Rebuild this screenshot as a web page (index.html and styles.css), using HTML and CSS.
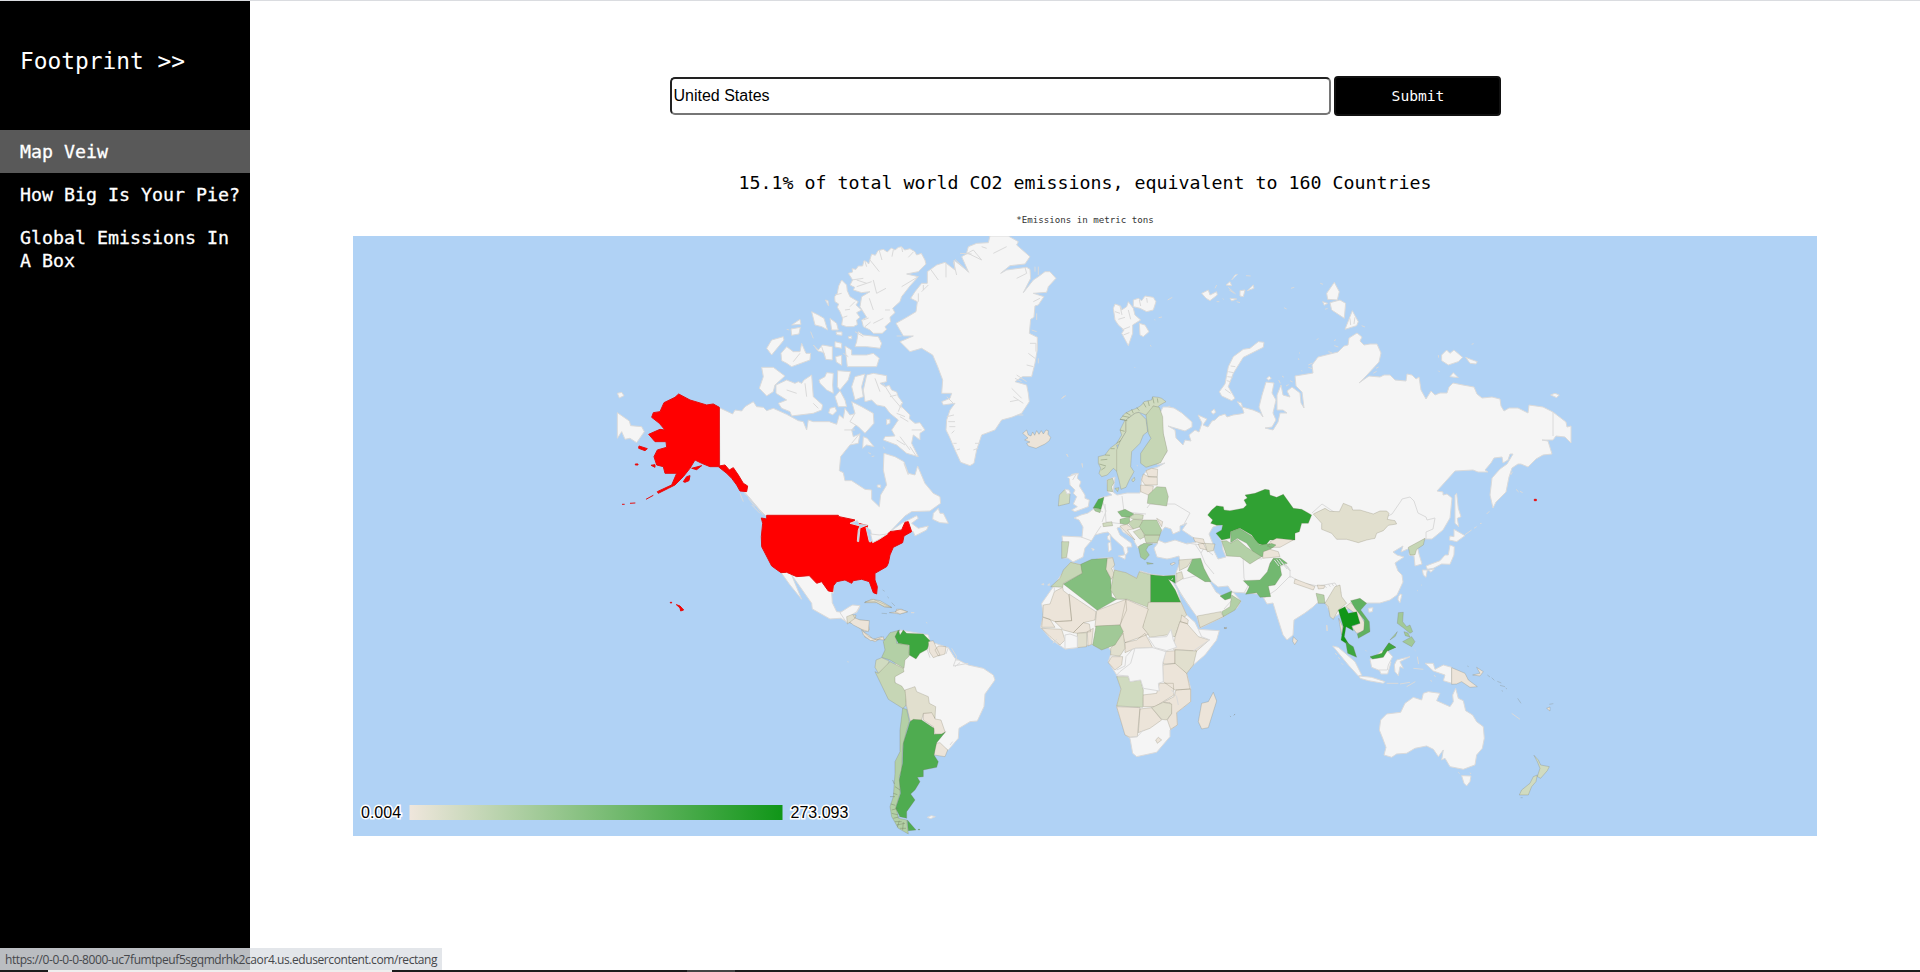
FILE: index.html
```html
<!DOCTYPE html>
<html lang="en">
<head>
<meta charset="utf-8">
<title>Footprint</title>
<link rel="stylesheet" href="styles.css">
</head>
<body>
<div class="layout">
  <nav class="sidebar">
    <h1 class="brand">Footprint &gt;&gt;</h1>
    <a class="nav-link active">Map Veiw</a>
    <a class="nav-link">How Big Is Your Pie?</a>
    <a class="nav-link">Global Emissions In<br>A Box</a>
  </nav>
  <main class="content">
    <form class="search">
      <input class="country" type="text" value="United States">
      <button class="submit" type="button">Submit</button>
    </form>
    <p class="summary">15.1% of total world CO2 emissions, equivalent to 160 Countries</p>
    <p class="note">*Emissions in metric tons</p>
    <svg class="map" viewBox="353 236 1464 600">
      <defs>
        <linearGradient id="scale"><stop offset="0" stop-color="#efe6dc"/><stop offset="1" stop-color="#109618"/></linearGradient>
      </defs>
      <!-- Eurasia -->
      <path class="land" d="M1160 413L1163 407 1168 407 1174 408 1182 413 1192 422 1192 427 1185 431 1168 426 1175 430 1176 438 1183 445 1185 440 1191 441 1189 435 1195 430 1199 432 1202 423 1198 415 1207 419 1203 425 1208 427 1212 421 1215 420 1219 416 1225 414 1227 417 1233 415 1240 414 1244 413 1242 407 1253 410 1260 413 1263 417 1259 407 1262 395 1266 382 1274 383 1272 393 1276 400 1273 413 1276 420 1272 427 1265 428 1273 430 1278 422 1280 413 1287 413 1283 410 1277 410 1277 395 1281 385 1283 395 1290 397 1287 391 1292 387 1300 393 1301 403 1304 408 1302 392 1296 386 1295 376 1313 373 1312 365 1318 357 1330 354 1338 352 1344 346 1348 345 1349 338 1357 333 1362 337 1360 341 1364 345 1370 344 1377 344 1381 353 1379 362 1367 375 1359 383 1366 378 1369 376 1380 377 1384 375 1390 375 1395 380 1406 381 1407 374 1412 375 1416 379 1419 377 1421 390 1426 399 1431 391 1435 395 1440 393 1447 393 1449 387 1453 383 1463 385 1474 387 1477 394 1482 398 1492 397 1500 399 1501 406 1504 411 1509 408 1518 408 1528 413 1529 405 1543 407 1553 412 1566 422 1567 427 1571 426 1571 443 1565 437 1556 436 1553 440 1542 440 1548 441 1552 454 1543 455 1536 459 1528 467 1521 464 1518 464 1512 468 1509 477 1506 492 1500 498 1496 502 1493 508 1490 495 1492 478 1500 469 1507 464 1510 459 1513 454 1510 454 1508 460 1503 463 1502 457 1494 458 1491 463 1485 470 1488 472 1478 472 1473 470 1455 471 1437 491 1443 492 1443 495 1447 494 1452 498 1450 518 1443 530 1432 539 1424 539 1417 545 1419 554 1422 564 1415 566 1414 556 1409 555 1410 548 1401 552 1403 546 1393 552 1397 555 1404 557 1395 563 1398 571 1402 575 1403 582 1397 595 1390 600 1380 603 1372 603 1366 603 1355 606 1345 610 1333 618 1325 602 1317 603 1313 607 1305 613 1294 620 1293 635 1287 640 1283 635 1276 613 1273 603 1267 604 1263 597 1258 594 1246 593 1232 592 1228 586 1218 587 1212 582 1205 573 1202 573 1210 582 1216 592 1222 596 1233 592 1241 601 1237 608 1223 617 1200 628 1197 617 1187 603 1180 592 1175 583 1176 573 1180 562 1179 556 1172 558 1167 559 1157 557 1154 548 1158 543 1150 543 1140 545 1138 548 1135 543 1133 538 1123 532 1120 527 1117 528 1120 535 1131 543 1132 547 1127 547 1128 552 1125 556 1123 547 1113 538 1108 532 1102 533 1095 535 1092 540 1085 548 1083 557 1073 562 1068 558 1062 558 1063 543 1062 536 1082 537 1083 527 1079 520 1074 518 1081 515 1088 513 1095 508 1100 498 1112 495 1108 492 1107 480 1115 477 1113 492 1117 495 1127 493 1140 493 1142 477 1147 470 1158 467 1165 463 1157 465 1167 452 1163 433Z"/>
      <!-- Inland seas -->
      <path class="sea" d="M1158 540L1160 533 1165 527 1171 529 1173 534 1180 531 1180 526 1187 523 1182 530 1194 538 1196 542 1187 544 1175 540 1165 543ZM1209 534L1213 527 1222 524 1223 529 1218 535 1222 542 1223 550 1226 557 1218 559 1214 551 1213 544Z"/>
      <!-- State borders on the uncoloured countries -->
      <path class="line" d="M1312 513L1322 504 1340 516 1366 513 1380 520 1392 514 1401 501 1402 499 1410 497 1414 501 1418 513 1426 517 1427 520 1435 518 1433 529 1426 532 1426 539M1147 508L1150 504 1175 504 1190 513 1183 526M1122 496L1124 512 1146 514M1102 522L1106 511 1102 500M1095 535L1101 526M1095 508L1103 512M1105 504L1106 522 1124 524M1081 537L1092 541M1201 553L1205 563 1214 574M1195 544L1201 553 1204 548 1213 555M1243 556L1244 578 1248 586 1244 593M1244 557L1262 559M1264 598L1276 590 1290 576 1302 583 1318 586 1335 583 1341 593M1280 559L1290 571 1290 578M1176 573L1183 579 1203 574M1180 593L1190 607M1232 600L1224 609M1187 543L1201 545M1553 412V436"/>
      <!-- Africa -->
      <g transform="translate(1020 540) scale(.3333)">
        <path class="land" d="M152 67L185 75 240 55 278 53 282 90 320 100 350 115 360 93 395 103 435 108 465 105 468 130 462 118 455 120 472 150 483 187 500 225 525 247 535 268 598 272 590 300 555 345 520 375 500 400 512 445 512 485 470 518 472 555 450 570 450 590 410 637 350 650 338 640 330 595 317 585 290 500 303 445 290 405 265 365 275 335 265 322 245 328 215 313 172 322 135 327 95 300 62 262 70 225 65 190 100 140 130 95Z"/>
        <path class="c2" d="M152 67L185 75 187 100 130 130 128 142 92 140 120 115 130 90Z"/>
        <path class="c5" d="M182 73L215 58 262 55 262 95 272 115 275 170 290 178 232 211 130 132 187 100Z"/>
        <path class="c1" d="M262 55L278 53 284 75 275 85 283 102 275 118 258 88Z"/>
        <path class="c2" d="M283 90L318 98 350 115 358 95 392 104 392 205 322 178 290 178 272 150Z"/>
        <path class="c9" d="M392 104L430 108 465 106 466 130 445 118 466 150 482 187 392 187Z"/>
        <path class="c1" d="M385 187H483L500 225 480 245 465 290 440 285 390 292 368 262Z"/>
        <path class="c0" d="M128 142L130 152 147 165 155 242 105 245 68 230 70 195 90 192 103 155ZM147 162L228 215 225 240 190 248 160 278 130 270 105 245 155 242ZM230 212L318 178 320 210 300 255 225 260ZM318 178L385 207 368 262 385 283 315 308 300 260ZM68 232L90 238 105 262 65 262ZM65 265L125 268 135 300 120 315 90 290ZM160 278L190 248 208 252 212 275 172 280ZM202 275L220 265 215 313 204 318ZM480 245L500 250 535 290 568 300 530 333 460 328 465 292ZM315 308L350 300 375 280 398 323 345 325 315 338ZM275 350L308 350 305 375 285 390 265 368ZM433 335L465 332 465 370 430 372ZM428 375L470 370 500 400 510 447 465 450 430 425ZM368 465L410 460 418 430 460 430 462 465 405 500 370 500ZM462 470L468 450 512 447 512 485 470 518 472 555 452 568 442 540 455 520 450 488 430 487ZM290 500L360 503 352 590 330 592 315 585ZM360 507L395 503 425 540 390 565 355 578ZM545 490L565 485 580 457 590 483 565 563 545 567 535 545ZM407 600L415 592 425 600 412 610ZM482 245L485 225 505 240 503 252Z"/>
        <path class="c1" d="M172 280L200 278 200 320 172 323ZM395 503L430 487 455 492 455 520 440 540 425 538ZM465 330L530 333 520 375 500 400 465 370ZM272 325L310 280 315 325 300 348 272 345Z"/>
        <path class="c4" d="M228 258L300 255 310 275 285 315 245 330 218 315Z"/>
        <path class="c1b" d="M290 410L325 410 330 425 362 420 370 450 368 502 290 498 303 447Z"/>
        <path class="land" d="M385 293L440 290 453 268 460 300 470 322 440 332 405 323ZM345 325L398 323 438 335 428 370 430 425 415 430 418 453 370 445 362 420 330 425 325 408 290 405 300 395 332 370ZM135 285L150 282 172 290 172 323 135 327Z"/>
        <path class="line" d="M340 325L318 350 315 378 290 390M520 333L568 300M330 592L352 590 370 570M455 450L470 470 475 495M103 142L103 155M535 268L545 290 570 300M110 298L98 310M458 115L455 120"/>
        <path class="c0" d="M612 265L620 262 618 266ZM630 528L632 530ZM645 522L642 526Z"/>
        <path class="land" d="M65 133l6-2 0 4zM83 135l5-4 0 5z"/>
      </g>
      <!-- Europe and the Middle East -->
      <g transform="translate(1020 380) scale(.3333)">
        <path class="c0" d="M8 160L20 150 25 165 33 168 38 156 44 166 50 152 57 163 64 152 70 162 78 150 85 152 84 163 92 172 88 182 75 192 62 198 48 205 25 198 20 190 30 186 14 180 24 174Z"/>
        <path class="c1b" d="M235 230L255 225 270 205 290 190 305 165 300 150 315 120 300 118 315 100 335 90 350 85 365 75 372 65 395 60 398 50 415 52 425 55 438 65 420 75 412 82 400 78 395 90 378 105 357 97 345 100 318 120 318 155 300 185 300 195 290 195 297 225 292 275 280 265 262 285 245 290 237 280 242 265 235 250Z"/>
        <path class="c1b" d="M345 100L357 97 378 118 383 155 370 165 360 190 335 215 332 260 342 275 328 300 318 322 303 328 297 300 290 275 290 210 300 185 318 155 318 120ZM335 300l8-8 2 8-6 6z"/>
        <path class="c2" d="M378 105L400 78 418 82 428 110 430 160 442 212 422 248 378 262 362 250 362 220 393 175 385 160Z"/>
        <path class="edge-line" d="M300 118L322 122M307 108L328 112M318 98L332 106M335 88L340 100M350 82L358 92M370 68L378 82M384 62L388 78M398 52L402 70M412 55L414 68M300 150L314 154M290 190L302 182M255 225L270 226M242 240L262 238M238 252L258 258M244 270L256 262M272 206L284 206"/>
        <path class="c2" d="M262 300L278 295 282 308 275 320 278 335 262 333ZM285 325l12-2-4 12z"/>
        <path class="land" d="M155 283L175 280 172 295 183 305 178 318 195 345 195 355 208 360 205 380 165 395 155 390 172 380 160 372 170 350 160 340 165 330 150 315 148 295Z"/>
        <path class="c1b" d="M118 345L135 328 150 342 148 370 115 378Z"/>
        <path class="land" d="M135 328l12 2 4 10-10 2zM140 222l4 8zM186 250l2 12zM125 55l12-8zM262 470l8-8 2 20-8-3zM264 490l8-5 2 25-8 5zM295 528l22-4-2 14zM215 505l8 3-4 4z"/>
        <path class="c8" d="M220 383L235 358 252 352 248 370 243 388Z"/>
        <path class="c4" d="M220 383L243 388 240 398 225 393Z"/>
        <path class="c0" d="M378 272L395 265 413 268 412 290 385 290ZM365 300L370 282 385 290 412 292 412 315 375 315ZM362 315L400 318 398 335 385 345 362 335Z"/>
        <path class="c3" d="M385 345L400 330 410 320 437 322 445 350 440 378 382 370Z"/>
        <path class="c5" d="M293 395L315 388 342 402 328 412 305 410Z"/>
        <path class="c4" d="M300 418L328 410 330 425 320 435 300 430Z"/>
        <path class="c1b" d="M248 430L275 425 278 437 250 440ZM328 412L345 402 370 405 368 418 340 418ZM340 455L365 445 375 470 360 478Z"/>
        <path class="c2" d="M325 430L340 418 368 420 362 440 340 447ZM372 465L420 465 412 488 378 488Z"/>
        <path class="c3" d="M358 440L370 420 410 420 425 450 420 465 375 465Z"/>
        <path class="c0" d="M300 438L320 433 340 447 322 450 345 480 315 455ZM410 415L428 425 425 440ZM520 473L550 477 555 492 525 485ZM535 492L550 490 560 510 540 505Z"/>
        <path class="c1" d="M555 490L585 492 580 512 562 515Z"/>
        <path class="c4" d="M355 500L372 490 398 492 385 498 378 510 388 525 375 540 362 532ZM380 547l20 4-18 2z"/>
        <path class="c2" d="M125 485L147 485 140 532 125 535Z"/>
        <path class="c1" d="M477 540L518 537 502 560 478 572ZM470 580L485 575 490 595 470 607Z"/>
        <path class="c5" d="M518 537L542 535 552 565 573 605 555 605 502 572Z"/>
        <path class="c0" d="M450 552l12-5 4 3-10 6z"/>
      </g>
      <!-- Asia -->
      <g transform="translate(1180 460) scale(.3333)">
        <path class="c10" d="M83 165L95 150 110 137 130 140 132 150 150 152 190 145 200 135 192 120 202 114 195 105 225 100 255 88 268 90 270 105 290 112 310 103 340 145 365 148 378 155 395 165 385 190 365 190 358 215 345 220 345 240 270 240 255 258 232 250 215 225 180 205 152 215 150 235 125 240 108 220 125 210 128 195 110 196 92 190 98 180Z"/>
        <path class="c5" d="M152 215L178 205 215 228 240 255 275 250 285 255 248 290 230 290 200 250 172 235 152 248Z"/>
        <path class="c3" d="M125 243L140 242 152 250 172 238 200 262 245 290 210 312 180 290 140 288Z"/>
        <path class="c0" d="M270 245L290 235 340 240 300 262 270 262ZM250 275L270 268 295 275 300 290 248 295ZM345 357L405 380 400 390 342 370ZM412 375L435 377 432 385 415 387Z"/>
        <path class="c1" d="M400 162L435 145 450 154 478 155 490 130 515 140 518 150 540 150 580 162 600 153 620 153 627 160 622 178 645 182 650 192 625 196 610 212 590 220 585 235 560 240 535 248 500 238 470 238 455 220 425 208 425 190Z"/>
        <path class="c6" d="M190 362L240 360 262 335 270 310 280 295 302 295 322 310 300 318 305 345 285 375 265 378 272 410 240 412 230 398 197 403 208 380Z"/>
        <path class="c7" d="M120 408L155 393 152 415 135 420Z"/>
        <path class="c3" d="M155 405L183 423 165 450 130 470 125 455 150 440Z"/>
        <path class="c1" d="M52 468L122 455 130 470 60 503Z"/>
        <path class="c3" d="M408 400L432 405 435 430 415 430Z"/>
        <path class="c1" d="M435 430L465 380 480 375 485 410 500 430 475 450 460 478 450 470 445 440Z"/>
        <path class="c0" d="M497 440L512 428 530 445 555 490 550 515 530 520 515 500 540 490 525 460ZM476 475L488 500 485 525ZM340 530l12 12-8 12-6-10z"/>
        <path class="c7" d="M512 422L540 415 560 430 542 450 568 485 570 515 535 535 532 522 552 510 553 480 525 445Z"/>
        <path class="c11" d="M475 450L495 440 505 460 530 455 540 490 515 498 520 512 498 500 493 530 510 558 483 540 490 500Z"/>
        <path class="c9" d="M497 545L520 560 530 592 503 580ZM572 592L605 580 627 548 647 562 625 572 612 592 580 598Z"/>
        <path class="c2" d="M685 262L735 235 730 255 710 268 705 285 690 285Z"/>
        <path class="c4" d="M655 458L670 457 668 485 680 500 690 495 698 515 690 520 672 505 652 490ZM668 545L695 530 705 545 695 560ZM630 540l22-25-6 14zM672 515l12 4 6 12-14-4z"/>
        <path class="c0" d="M132 503l8 2z"/>
        <path class="land" d="M655 410l6-8 5 2-6 24-6-8zM565 445l14-2-2 12-10 2zM440 495l2 18zM605 572l-22 20 20 50 20 0 10-35z"/>
        <path class="line" d="M283 300l14 18M290 298l16 22M298 297l16 22M305 305l16 22M315 310l14 22M322 318l10 15M435 378l5 6M445 372l6 8M455 370l6 8"/>
        <path class="c5" d="M262 258l12-8 14 5-10 8z"/>
      </g>
      <!-- Japan, Sakhalin and the Kurils -->
      <g transform="translate(1340 440) scale(.3333)">
        <path class="land" d="M345 165L350 160 355 205 363 230 352 235 356 260 345 250ZM342 268L375 287 350 305 328 300 330 288 342 290ZM330 315L343 320 342 345 330 373 305 372 280 385 262 388 258 378 300 362 315 345 325 345ZM247 390L262 390 258 412 250 405ZM265 390l18-3-10 10zM375 284L395 270M402 265l8-5M420 251l5-1M440 222l8-8M528 148l8 8M540 154l8 4M512 105l6-10"/>
        <path class="us" d="M583 178h6v4h-6z"/>
      </g>
      <!-- Arctic islands of Eurasia -->
      <g transform="translate(1100 230) scale(.3333)">
        <path class="land" d="M40 235L45 222 62 228 65 240 80 230 85 215 100 235 105 255 122 270 98 285 98 310 85 347 65 310 72 300 55 285 45 270ZM100 210L115 205 125 212 135 198 160 202 168 215 160 240 140 245 120 235 100 230ZM118 280L135 285 147 305 130 320 120 315ZM203 210l14-8M176 263l10-2M164 268l1 3M150 346l4 3M104 412l2 2M305 190L325 180 330 195 350 185 352 195 330 212 318 205ZM345 175l5-10M378 165l12-10 5 12zM395 150l10-15 8-2M385 172l22 20M388 180l15 10M420 182L435 180 430 200 420 198ZM442 182L460 165 462 175ZM390 205l20 2-15 6zM410 215l10 3M438 137l14 1M350 215l8 0M368 206l3 2M573 175l10-3M552 233l8 4M661 160l8 3M680 190L703 157 718 185 712 210 683 208ZM690 218L720 210 737 220 733 265 695 240ZM668 215l15 5-10 6zM675 238l8-3M735 298L750 260 757 242 775 275 770 287ZM785 287l10 4M650 330l5-5M702 332l6-3M703 347l12 4M685 365l12 4M597 368l3 2M595 385l2 5M604 422l3 1M625 405l12-6M625 412l12 4M828 415l8-4M820 430l10-6M358 485L375 462 385 410 400 380 430 358 450 355 475 335 492 337 490 352 430 382 400 430 385 470 405 505 395 512 365 498ZM412 515l12 4 4 14-8-6zM500 445l8-6 6 6-8 6zM536 450l5 10M546 438l6 4M570 452l8 4M558 468l8-4M333 545l10-8 4 10-8 6zM1025 375L1040 360 1050 370 1062 360 1088 382 1075 395 1045 405 1025 392ZM1097 382L1112 388 1132 395 1128 402 1110 400ZM1015 375l1 8M1015 422l4 4M1115 343l6-2M1050 440L1060 428 1075 443ZM1352 495L1365 490 1378 495 1370 503ZM205 529l6 0M110 706l4 2"/>
        <path class="line" d="M45 245L60 250M55 268L75 262M65 300L90 290M70 315L88 308M85 240L92 268M60 228L66 255M118 210L122 228M140 204L142 218M385 425L400 428M382 440L398 442M380 452L392 455M392 408L406 410M375 478L392 490M750 265L752 285M765 262L762 282"/>
      </g>
      <!-- North America -->
      <g transform="translate(600 230) scale(.3333)">
        <path class="land" d="M358 533L398 552 405 540 425 543 435 530 460 515 470 530 490 532 500 542 520 535 560 553 595 572 610 575 620 600 625 570 640 575 688 575 710 583 718 555 730 565 735 535 750 555 768 550 772 580 755 600 760 620 780 612 775 640 750 645 722 680 718 722 730 728 735 752 755 752 795 778 815 780 815 808 838 830 842 795 860 765 850 720 852 670 885 680 912 695 925 730 945 735 953 708 975 760 1000 790 1020 800 1022 820 990 843 935 845 915 858 870 905 905 880 935 865 950 857 955 865 935 880 955 895 985 888 980 900 945 918 940 905 890 905 830 950 700 1050 700 1090 695 1088 697 1118 710 1145 740 1148 755 1127 780 1130 770 1148 750 1152 740 1175 722 1165 690 1167 637 1137 635 1120 600 1070 575 1035 585 1060 605 1108 570 1065 545 1030 540 1000 500 860 480 840 420 770 360 705Z"/>
        <path class="land" d="M1000 850L1015 835 1020 850 1030 850 1045 880 1020 878 998 868ZM52 548L88 573 92 587 125 590 133 605 110 638 90 625 75 628 65 605 52 625ZM52 490L65 487 72 497 58 504ZM790 620L802 625 822 650 800 645 788 655ZM805 668l8 4M832 765l10 0 0 8-10-2zM850 650l4 8"/>
        <!-- Canadian arctic -->
        <path class="land" d="M745 130L758 126 756 116 768 118 775 108 788 108 792 92 800 95 806 102 815 72 826 76 834 62 850 58 862 66 874 54 885 60 895 52 905 50 914 60 930 56 945 65 950 75 964 70 975 90 978 102 955 125 920 132 955 140 930 168 905 200 900 215 878 235 885 248 870 262 872 275 855 290 860 298 847 310 820 310 810 300 790 290 785 270 800 262 780 230 785 200 810 185 785 188 760 180 764 172 750 165 758 150ZM725 150L740 165 742 182 750 200 775 215 768 225 785 240 770 248 780 262 770 270 772 284 760 290 740 290 725 285 728 265 720 245 712 232 716 222 705 215 704 200 712 190 716 168ZM775 305L790 315 835 320 845 340 840 355 800 350 765 350 770 335ZM735 348L755 360 755 375 800 375 820 370 838 385 830 410 742 410ZM690 265L710 280 715 300 695 300ZM635 245L655 255 672 265 683 300 665 290 645 285ZM632 305l8 20M676 210l8 2 2 16zM575 285l25-17 3 15zM573 297l28-5-4 20-22 4zM560 298l8 2M500 355L515 330 550 320 552 330 515 375ZM543 370L560 350 580 365 600 365 605 340 618 370 632 370 630 390 575 410 560 400 545 392ZM640 345l15 15 12-15 30 5 0 40-20-2-5-20-18-5zM705 335l20 5 0 15-20-4zM707 380l18-4 0 30-16-10zM708 306l18 0 0 10-16-2zM745 320l10-2 0 8-8 0zM485 412L520 412 555 438 525 465 520 485 500 498 478 475 490 440ZM528 465L560 450 585 460 595 455 605 460 612 450 635 435 640 500 668 525 665 540 640 550 575 558 570 545 545 535 535 520 560 510 528 490ZM657 450L675 440 680 428 700 430 698 465 700 490 680 480 660 460ZM713 422L752 425 745 450 720 480 712 470ZM705 500L720 482 735 510 740 530 715 530ZM690 535l15-4 5 12-12 12-12-6zM755 470L765 440 795 432 785 470 790 500 765 510ZM800 435L820 430 860 437 860 455 840 460 855 470 868 466 875 480 890 486 895 500 908 518 903 528 915 540 930 555 928 566 945 580 960 578 975 600 960 610 960 630 940 615 935 640 955 680 920 670 890 645 850 630 855 620 885 618 875 600 895 570 870 550 855 530 830 525 815 510 795 515 790 480ZM755 515L785 530 820 550 822 580 795 610 775 590 750 575 765 550ZM860 568l10 0 0 12-10 4zM815 680l8-2"/>
        <path class="line" d="M810 90L838 125M800 160L770 150M858 175L830 190 820 150M955 140L905 170M855 240L870 240M725 190L705 195M765 215L750 230M808 205L820 240M850 265L820 280M765 305L790 320M825 445L840 485M850 460L875 500 905 535M870 500L890 495M905 520L895 545M915 560L890 550M925 575L900 560M935 600L965 600M560 480L590 490M615 460L620 500M640 520L655 535M733 600L765 600M755 640L780 610M600 370L580 395M665 350L675 380M730 370L745 380M755 150L790 145M770 170L815 155M420 790L430 815M432 790L445 800 470 830 490 855M445 805L465 830M455 825L480 850M890 630L915 645M930 650L950 680M900 620L930 660M912 700L925 735M838 62L846 90M880 60L876 80M905 52L908 66M940 66L925 82M795 95L800 110M735 240L750 238M730 262L742 258M790 270L806 264M795 290L812 276"/>
        <!-- United States -->
        <path class="us" d="M500 856H715L717 860 765 870 750 882 775 880 803 887 800 895 812 920 808 938 860 915 870 905 905 900 915 877 925 875 935 905 912 918 908 938 880 952 870 975 865 1000 860 1010 825 1030 825 1050 832 1070 830 1092 820 1088 808 1055 785 1048 760 1052 755 1060 735 1050 710 1055 700 1068 698 1085 685 1083 665 1055 650 1060 628 1037 590 1040 560 1027 543 1028 515 1008 485 950 484 920 488 880 484 864 500 867ZM358 532V708L375 705 388 720 400 713 415 735 430 760 443 768 440 785 420 783 410 765 395 745 380 730 355 710 330 710 305 700 285 690 270 715 250 740 225 765 205 775 175 790 172 785 215 765 230 730 195 730 190 710 170 705 162 680 172 660 200 652 198 635 165 635 146 613 180 598 195 600 178 580 155 562 160 548 180 545 192 518 225 502 236 492 270 510 320 525 340 522ZM117 648L142 656 135 662 116 655ZM106 702h8v3h-8zM153 706l12-2 0 8zM138 808L160 796M66 823h8M90 820l16-1M250 755l10-15 10-3-3 15-12 5zM275 715l30-8-15 12zM211 1117h4v2h-4zM229 1124L240 1128 251 1140 242 1143 240 1134Z"/>
        <path class="lake" d="M750 880L772 872 778 884 802 885 780 894 776 935 772 934 775 900 780 888ZM798 892L812 900 815 918 825 920 812 936 808 935Z"/>
        <path class="land" d="M812 912L838 915 862 912 838 928 818 938Z"/>
        <!-- Central America and the Caribbean -->
        <path class="c1" d="M738 1175L750 1155 768 1155 765 1170 755 1180ZM793 1118L815 1108 840 1112 875 1132 855 1132 830 1118Z"/>
        <path class="c0" d="M758 1180L770 1170 803 1172 808 1200 795 1205ZM790 1205L805 1215 820 1228 845 1220 855 1230 838 1228 825 1235 795 1222ZM868 1148L888 1146 890 1138 905 1138 922 1146 900 1152ZM845 1150l16 1M848 1080l6 4M862 1100l5 5M875 1118l10 10"/>
        <path class="land" d="M933 1148h10M979 1178l2 1"/>
      </g>
      <!-- Greenland -->
      <g transform="translate(840 230) scale(.3333)">
        <path class="land" d="M450 18H505L535 35 530 45 570 80 555 102 510 107 482 130 500 120 560 112 570 118 572 145 550 188 580 150 595 140 615 125 630 125 648 145 625 170 620 187 580 190 612 200 595 225 585 228 582 262 572 268 568 310 592 322 592 360 585 400 575 440 548 440 525 455 560 465 565 490 568 515 545 550 515 562 485 570 465 600 425 615 410 660 402 700 390 707 362 697 345 660 328 620 318 600 320 570 330 540 345 520 310 525 305 515 330 505 335 490 305 490 308 450 293 410 278 375 245 355 210 365 180 335 220 318 190 318 168 280 200 262 228 245 232 215 212 205 225 185 245 160 262 160 262 125 290 105 315 97 345 120 342 90 385 125 365 80 400 60 425 90 380 68 385 50 410 40 445 38Z"/>
        <path class="line" d="M272 118L295 150M318 98L318 142M340 95L350 135M345 88L388 128M360 70L395 72M425 50L440 55M460 70L500 50M555 112L560 130 530 145M585 110V125M595 110L595 135M580 215L600 205M590 250v20M570 340h18M575 300l15 5M588 340v25M565 370l20 15M595 385v15M560 405l20 5M525 445l20 10M530 435l30 20M515 475l30 30M510 515l25-5M520 500l30 20M320 500l20 20M320 560l22-5M325 575l20 0M328 590l18 0M335 610l8-8M340 640l10 0M350 660l10-3M400 660l15-5M405 640l15 0M235 215V190M250 180V165M170 318h15M265 165L245 185M535 555l15 0"/>
        <path class="land" d="M665 505l8-7M682 742l10-4 18-8-12 20M680 674l3 4"/>
      </g>
      <!-- South America -->
      <g transform="translate(840 580) scale(.3333)">
        <path class="land" d="M0 98L28 80 38 75 60 77 50 95 35 105 20 128ZM180 150L265 165 270 185 325 203 345 235 385 255 430 265 460 285 465 300 435 342 432 380 412 423 390 425 357 445 355 475 325 510 300 500 200 380 162 300 170 220Z"/>
        <path class="c3" d="M130 185L150 158 180 150 168 165 170 190 205 195 208 228 195 240 192 265 150 240 125 232 135 210Z"/>
        <path class="c1b" d="M108 240L125 233 148 243 140 262 115 280 105 262Z"/>
        <path class="c2" d="M105 275L115 280 150 245 190 265 192 275 165 290 165 308 185 318 200 340 197 378 188 385 145 358Z"/>
        <path class="c9" d="M165 170L175 150 180 165 190 150 200 160 250 162 270 182 262 208 240 220 228 237 208 225 208 195 175 190Z"/>
        <path class="c0" d="M265 185L280 182 290 205 300 225 280 233 268 215ZM285 210L295 198 318 200 315 222 295 228ZM250 400L280 397 285 417 303 420 315 455 310 463 285 463 280 440 250 420ZM285 490L300 488 323 510 315 530 282 525ZM22 120L40 112 60 120 88 122 85 155 65 148 40 135ZM65 150L85 170 110 180 130 170 132 180 110 178 92 182 70 165ZM165 95L180 88 203 95 180 102Z"/>
        <path class="c1" d="M195 330L225 320 230 335 265 350 268 370 287 380 285 415 275 398 250 400 245 420 210 423 200 380ZM20 110L38 103 45 115 22 132ZM75 66L100 58 155 83 130 78 105 65Z"/>
        <path class="c3" d="M188 385L200 388 208 425 200 450 188 500 185 570 178 590 180 640 168 680 175 715 200 720 205 762 175 745 155 710 150 680 160 650 165 580 165 545 180 515 180 450Z"/>
        <path class="c8" d="M210 425L220 418 245 420 282 445 282 463 305 462 317 455 290 488 282 525 295 545 290 562 250 570 250 590 232 592 240 605 225 630 212 642 225 660 200 695 200 715 180 710 167 685 182 640 178 600 188 550 190 490ZM202 720L228 750 205 752ZM235 748h4v2h-4z"/>
        <path class="line" d="M335 205L350 230 345 245 340 258 385 250M325 203L318 222M345 240h10M360 248L345 260M270 233L262 210M330 495l8-10"/>
        <path class="edge-line" d="M155 690l20-5M155 700l20 5M160 715l20-5M165 725l20 0M170 735l25-5M165 620l15 10M150 650l15 0M158 600l5 12M180 745l18 0M152 672l14 4M160 640l12 4M172 742l6-20M188 750l2-24"/>
        <path class="land" d="M262 712l12-5 12 3-14 6zM214 98h8M260 128l2 1M22 245l4 1"/>
      </g>
      <!-- Oceania and Indonesia -->
      <g transform="translate(1300 540) scale(.3333)">
        <path class="land" d="M242 540L260 522 302 517 315 490 340 472 365 480 370 460 385 455 420 460 410 482 450 500 460 485 458 465 467 445 475 475 490 482 497 512 518 525 530 545 550 560 553 595 547 625 530 645 525 675 490 688 450 680 435 655 425 660 430 630 415 650 400 628 380 618 345 625 320 640 290 642 275 652 252 645 258 622 248 595 238 570ZM485 707L513 708 510 725 500 738 492 730ZM475 697l4 4M510 698l3 4"/>
        <path class="land" d="M98 318L115 322 165 365 185 405 175 408 145 375ZM178 408L215 412 255 425 250 430 205 422 180 415ZM210 358L245 352 262 332 278 350 265 375 262 390 235 390 215 382ZM290 360L330 350 300 365 310 385 300 380 295 407 285 395 283 375ZM352 350l4 22M340 385l30 3M260 430h35M300 432l30-5M320 440l26-15M375 370L400 370 405 388 430 375 455 382 455 430 430 422 435 405 400 393ZM105 340l6 4M115 352l5 6M125 370l4 4M197 331l3 3M344 330l2 2M392 420l3 5M402 405l5 6M635 520L660 538M80 255l1 18M364 135l2 1M352 152l2 0"/>
        <path class="c9" d="M210 350L245 340 266 310 288 322 262 332 250 352 218 357Z"/>
        <path class="c0" d="M455 383L495 400 505 420 532 440 510 442 485 425 470 432 455 433ZM518 405L540 400 530 382 550 395 540 408ZM502 378l4 2M562 405l8 6M575 413l8 8M592 424l12 5M600 436l15 4M605 452l4 2M617 444l4 3M653 475l10 15M740 505l10-4 0 12zM748 493l12-2"/>
        <path class="c1b" d="M702 646L715 660 722 675 748 680 742 692 722 715 712 710 720 685 712 665ZM712 705L708 725 695 740 685 765 658 765 665 750 690 730 700 710ZM662 773h6"/>
      </g>
      <!-- Colour scale -->
      <rect x="409.500" y="805" width="373" height="15" fill="url(#scale)"/>
      <text class="legend" x="361" y="818">0.004</text>
      <text class="legend" x="790.500" y="818">273.093</text>
    </svg>
  </main>
</div>
<div class="status"><span>https://0-0-0-0-8000-uc7fumtpeuf5sgqmdrhk2caor4.us.edusercontent.com/rectang</span></div>
<div class="edge"></div>
</body>
</html>
```
FILE: styles.css
```css
* { box-sizing: border-box; }
body {
  margin: 0;
  height: 972px;
  overflow: hidden;
  border-top: 1px solid #dadce0;
  background: #fff;
  color: #000;
  font-family: Consolas, "DejaVu Sans Mono", monospace;
}
.layout { display: flex; height: 969px; }
.sidebar { width: 250px; background: #000; color: #fff; }
.brand {
  margin: 0;
  padding: 45px 20px 0;
  height: 129px;
  font-size: 22.84px;
  font-weight: 400;
  line-height: 31px;
}
.nav-link {
  display: block;
  padding: 10px 0 10px 20px;
  font-size: 18.27px;
  line-height: 23px;
  white-space: nowrap;
  -webkit-text-stroke: .3px #fff;
}
.nav-link.active { background: #595959; }
.content {
  flex: 1;
  display: flex;
  flex-direction: column;
  align-items: center;
  padding-top: 75px;
}
.search { display: flex; align-items: center; gap: 3px; height: 40px; }
.country {
  width: 661px;
  height: 38px;
  padding: 0 2px;
  border: 2px solid;
  border-color: #222 #767676 #767676 #222;
  border-radius: 5px;
  font: 16px "Liberation Sans", Arial, sans-serif;
}
.submit {
  width: 167px;
  height: 40px;
  padding: 0 0 2px 2px;
  border: 2px solid #111;
  border-radius: 4px;
  background: #000;
  color: #fff;
  font: 14.62px "DejaVu Sans Mono", monospace;
}
.summary { margin: 55px 0 0; font-size: 18.27px; line-height: 24px; }
.note { margin: 19px 0 0; font-size: 9.13px; line-height: 12px; color: #333; }
.map { display: block; width: 1464px; height: 600px; margin-top: 10px; background: #b0d2f5; }
.map path { stroke-width: 1px; vector-effect: non-scaling-stroke; stroke-linejoin: round; stroke: rgba(120, 115, 90, .25); }
.map .land { fill: #f5f5f5; stroke: #dadada; }
.map .line { fill: none; stroke: #dadada; }
.map .edge-line { fill: none; stroke: rgba(110, 125, 90, .4); }
.map .sea { fill: #b0d2f5; stroke: #dadada; }
.map .lake { fill: #b0d2f5; stroke: #dadada; }
.map .us { fill: #f00; stroke: #e60d0d; }
.c0 { fill: #ece4d9; }
.c1 { fill: #e1dfce; }
.c1b { fill: #d0dbc0; }
.c2 { fill: #c6d6b5; }
.c3 { fill: #b3d0a6; }
.c4 { fill: #a1c997; }
.c5 { fill: #84bf7f; }
.c6 { fill: #72b870; }
.c7 { fill: #60b160; }
.c8 { fill: #4fac50; }
.c9 { fill: #3da73f; }
.c10 { fill: #30a133; }
.c11 { fill: #109618; }
.legend {
  font: 16px "Liberation Sans", Arial, sans-serif;
  stroke: #fff;
  stroke-width: 3px;
  paint-order: stroke;
}
.status {
  position: absolute;
  left: 0;
  top: 948px;
  width: 442px;
  height: 22px;
  padding-left: 5px;
  overflow: hidden;
  background: rgba(222, 225, 230, .84);
  color: #45474b;
  font: 12px/23px "Open Sans", sans-serif;
  letter-spacing: -.42px;
  white-space: nowrap;
}
.edge {
  height: 2px;
  background: linear-gradient(90deg, #1b1b1b 48px, #eee 48px 392px, #1b1b1b 392px 687px, #444 687px 735px, #1b1b1b 735px);
}
```
